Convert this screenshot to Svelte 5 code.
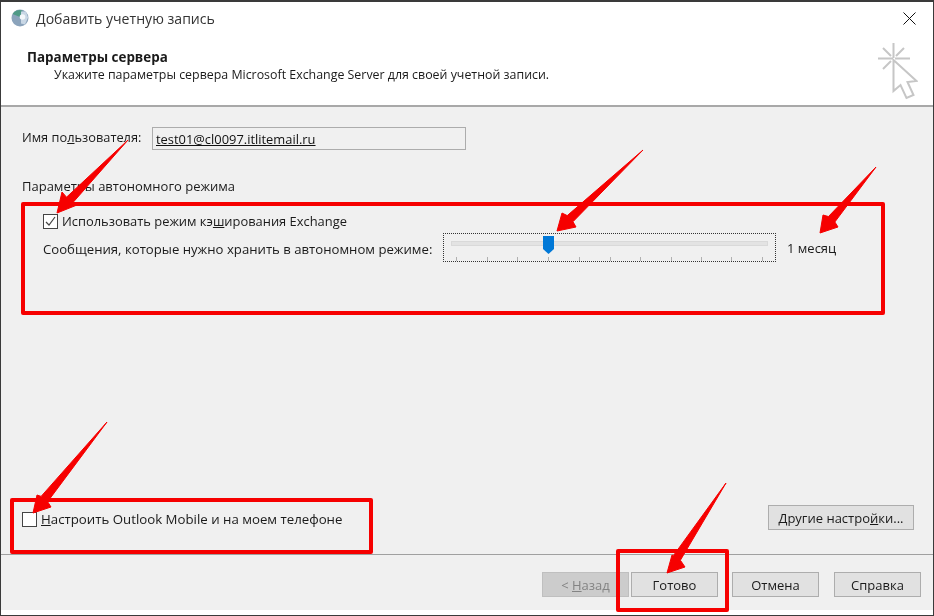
<script>
  const ticks = [456, 487, 517, 548, 579, 610, 640, 671, 701, 731, 762];

  // builds a tapered callout arrow from its tail, tip and the two barbs
  function arrow(tail, tip, barbA, barbB) {
    const dx = tail[0] - tip[0];
    const dy = tail[1] - tip[1];
    const len = Math.hypot(dx, dy);
    const ux = dx / len;
    const uy = dy / len;
    const cx = tip[0] + ux * 18;
    const cy = tip[1] + uy * 18;
    const hw = 4.2;
    const neckA = [cx + uy * hw, cy - ux * hw];
    const neckB = [cx - uy * hw, cy + ux * hw];
    return [tail, neckA, barbA, tip, barbB, neckB].map((p) => p.join(',')).join(' ');
  }

  const arrows = [
    arrow([128, 140], [57, 213], [62, 192], [77, 205]),
    arrow([643, 150], [557, 231], [562, 213], [576, 227]),
    arrow([876, 167], [820, 233], [823, 215], [838, 227]),
    arrow([107, 422], [33, 513], [37, 495], [51, 507]),
    arrow([726, 483], [667, 573], [672, 555], [685, 567])
  ];
  const boxes = [
    { x: 23, y: 204, w: 860, h: 109 },
    { x: 12, y: 500, w: 359, h: 52 },
    { x: 618, y: 551, w: 109, h: 59 }
  ];
</script>

<div class="window">
  <div class="titlebar">
    <svg class="app-icon" width="18" height="18" viewBox="0 0 18 18">
      <circle cx="9" cy="9" r="8.500" fill="#8ba3bb" />
      <path d="M1.500 5a8.500 8.500 0 0 1 10-3.500L9 8z" fill="#4f9a86" />
      <path d="M10 2.500h5l2 6-3 7-4-1z" fill="#c9d7e5" />
      <circle cx="11.500" cy="8" r="2.800" fill="#f4f7fa" />
    </svg>
    <span class="title">Добавить учетную запись</span>
    <svg class="close" width="13" height="13" viewBox="0 0 13 13">
      <path d="M0.500 0.500l12 12M12.500 0.500l-12 12" stroke="#111" stroke-width="1" fill="none" />
    </svg>
  </div>

  <div class="header">
    <div class="heading">
      <div class="heading-title">Параметры сервера</div>
      <div class="heading-sub">Укажите параметры сервера Microsoft Exchange Server для своей учетной записи.</div>
    </div>
    <svg class="cursor" width="40" height="60" viewBox="0 0 40 60" fill="none" stroke="#c6c6c6">
      <path stroke-width="2" d="M15.500 0v15M0 15.500h15M17 15.500h15M5 5l8 8M26 5l-8 8M5 26l8-8" />
      <path d="M15.500 17v31l7-6 6 13 7-3-6-13 9-1z" stroke-width="2" fill="#fff" />
    </svg>
  </div>

  <div class="body">
    <div class="user-row">
      <span class="label">Имя по<u>л</u>ьзователя:</span>
      <div class="input"><span>test01@cl0097.itlitemail.ru</span></div>
    </div>

    <div class="group-title">Параметры автономного режима</div>

    <label class="check-row cache">
      <span class="checkbox">
        <svg width="13" height="13" viewBox="0 0 13 13"><path d="M2 7l3 3 6-8" stroke="#444" stroke-width="1.200" fill="none" /></svg>
      </span>
      <span>Использовать режим кэ<u>ш</u>ирования Exchange</span>
    </label>

    <div class="slider-row">
      <span class="slider-label">Сообщения, которые нужно хранить в автономном режиме:</span>
      <div class="slider">
        <div class="track"></div>
        <svg class="thumb" width="11" height="18" viewBox="0 0 11 18"><path d="M0 0h11v13l-5.500 5L0 13z" fill="#0078d7" /></svg>
        {#each ticks as t}
          <span class="tick" style="left: {t - 444}px"></span>
        {/each}
      </div>
      <span class="slider-value">1 месяц</span>
    </div>

    <div class="bottom-row">
      <label class="check-row mobile">
        <span class="checkbox"></span>
        <span class="mobile-text"><u>Н</u>астроить Outlook Mobile и на моем телефоне</span>
      </label>
      <button class="btn more">Другие настро<u>й</u>ки...</button>
    </div>
  </div>

  <div class="footer">
    <button class="btn disabled">&lt; <u>Н</u>азад</button>
    <button class="btn">Готово</button>
    <button class="btn cancel">Отмена</button>
    <button class="btn help">Справка</button>
  </div>

  <div class="strip"></div>

  <!-- red annotations on top of the screenshot -->
  <svg class="marks" width="934" height="616" viewBox="0 0 934 616">
    {#each boxes as b}
      <rect x={b.x} y={b.y} width={b.w} height={b.h} fill="none" stroke="#f60000" stroke-width="4" stroke-linejoin="round" />
    {/each}
    {#each arrows as a}
      <polygon points={a} fill="#f60000" stroke="#f60000" stroke-width="1" stroke-linejoin="round" />
    {/each}
  </svg>
</div>

<style>
  :global(body) {
    background: #fff;
  }

  .window {
    position: relative;
    width: 934px;
    height: 616px;
    box-sizing: border-box;
    border: 1px solid #3a3a3a;
    border-top-width: 2px;
    background: #fff;
    display: flex;
    flex-direction: column;
    font-family: "Open Sans", "Noto Sans", sans-serif;
    font-size: 13px;
    color: #1a1a1a;
    overflow: hidden;
    filter: blur(0.35px);
  }

  .titlebar {
    height: 32px;
    display: flex;
    align-items: center;
    padding: 0 17px 0 10px;
    flex-shrink: 0;
  }

  .app-icon {
    margin-right: 7px;
  }

  .title {
    flex: 1;
    font-size: 14.100px;
    color: #333;
  }

  .header {
    height: 73px;
    flex-shrink: 0;
    box-sizing: border-box;
    border-bottom: 2px solid #a8a8a8;
    display: flex;
    justify-content: space-between;
    padding: 14px 15px 0 26px;
  }

  .heading-title {
    font-weight: 700;
    font-size: 13.400px;
    line-height: 18px;
  }

  .heading-sub {
    margin-left: 27px;
    font-size: 12.400px;
    line-height: 18px;
  }

  .cursor {
    margin-top: -5px;
  }

  .body {
    flex: 1;
    background: #f0f0f0;
    display: flex;
    flex-direction: column;
    padding: 20px 19px 0 21px;
    border-bottom: 1px solid #a0a0a0;
  }

  .user-row {
    display: flex;
    align-items: center;
  }

  .label {
    width: 130px;
    flex-shrink: 0;
    font-size: 12.800px;
    padding-bottom: 4px;
  }

  .input {
    width: 314px;
    height: 23px;
    box-sizing: border-box;
    border: 1px solid #acacac;
    padding: 1px 3px 0;
    line-height: 21px;
    color: #111;
    font-size: 12.900px;
  }

  .input span {
    text-decoration: underline;
  }

  .group-title {
    margin-top: 27px;
    line-height: 18px;
  }

  .check-row {
    display: flex;
    align-items: center;
    gap: 4px;
  }

  .cache {
    margin: 17px 0 0 21px;
    font-size: 12.900px;
  }

  .checkbox {
    width: 13px;
    height: 13px;
    border: 1px solid #444;
    background: #fff;
    display: block;
    flex-shrink: 0;
  }

  .checkbox svg {
    display: block;
  }

  .slider-row {
    display: flex;
    align-items: center;
    margin: 3px 0 0 21px;
  }

  .slider-label {
    width: 400px;
    flex-shrink: 0;
    font-size: 13.170px;
    padding-top: 2px;
  }

  .slider {
    position: relative;
    width: 331px;
    height: 27px;
    border: 1px dotted #333;
    flex-shrink: 0;
  }

  .track {
    margin: 7px 7px 0;
    height: 5px;
    box-sizing: border-box;
    background: #e3e3e3;
    border: 1px solid #d9d9d9;
  }

  .thumb {
    position: absolute;
    left: 99px;
    top: 2px;
  }

  .tick {
    position: absolute;
    top: 23px;
    width: 1px;
    height: 4px;
    background: #b0b0b0;
  }

  .slider-value {
    margin-left: 11px;
  }

  .bottom-row {
    margin-top: auto;
    margin-bottom: 24px;
    display: flex;
    align-items: center;
    justify-content: space-between;
  }

  .mobile {
    padding-top: 3px;
  }

  .mobile-text {
    font-size: 13.250px;
  }

  .btn {
    width: 87px;
    height: 25px;
    box-sizing: border-box;
    background: #e1e1e1;
    border: 1px solid #adadad;
    border-radius: 0;
    padding: 0;
    font: inherit;
    color: #1a1a1a;
  }

  .btn.more {
    width: 146px;
  }

  .btn.disabled {
    background: #cccccc;
    border-color: #bfbfbf;
    color: #838383;
  }

  .footer {
    height: 55px;
    flex-shrink: 0;
    box-sizing: border-box;
    background: #f0f0f0;
    display: flex;
    justify-content: flex-end;
    padding: 17px 12px 0 0;
    gap: 2px;
  }

  .btn.cancel {
    margin-left: 12px;
  }

  .btn.help {
    margin-left: 13px;
  }

  .strip {
    height: 5px;
    flex-shrink: 0;
  }

  .marks {
    position: absolute;
    left: -1px;
    top: -2px;
    pointer-events: none;
  }
</style>
